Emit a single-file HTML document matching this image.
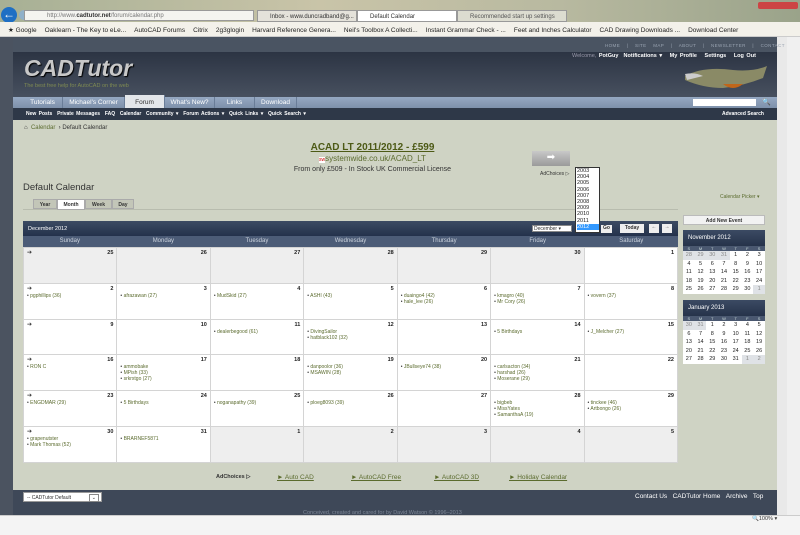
<!DOCTYPE html>
<html><head><meta charset="utf-8"><style>
*{margin:0;padding:0;box-sizing:border-box}
body{width:800px;height:535px;overflow:hidden;background:#4b5360;font-family:"Liberation Sans",Verdana,sans-serif;position:relative;font-size:6px;color:#333}
.a{position:absolute}
#chrome{left:0;top:0;width:800px;height:22px;background:linear-gradient(90deg,#a7b095,#c9c4a8 40%,#b8b9a0 70%,#9aa38a)}
#fav{left:0;top:22px;width:800px;height:15px;background:#f3f1ea;border-bottom:1px solid #ccc;font-size:6.5px;color:#222;white-space:nowrap;padding:4px 0 0 8px}
#fav span{margin-right:8px}
.url{left:24px;top:10px;width:230px;height:11px;background:#f4f4f0;border:1px solid #999;font-size:6px;color:#777;padding:2px 0 0 22px}
.tab{top:10px;height:12px;font-size:6px;padding:3px 0 0 12px;border:1px solid #999;color:#333}
#wrap{left:13px;top:37px;width:764px;height:478px;background:#4a5462}
#scroll{left:777px;top:37px;width:10px;height:478px;background:#e9e9e9}
#scroll2{left:787px;top:37px;width:13px;height:478px;background:#f0f0f0}
#toplinks{left:605px;top:43px;font-size:4.5px;color:#9aa4b2;letter-spacing:.4px;white-space:nowrap;word-spacing:5px}
#header{left:13px;top:52px;width:764px;height:45px;background:linear-gradient(#2c3443,#47505f)}
#logo{left:24px;top:55px;font:italic bold 23px "Liberation Sans",sans-serif;color:#c8c8c8;text-shadow:1px 1px 1px #000}
#tag{left:24px;top:83px;font-size:5.5px;color:#7f8b52}
#welcome{left:572px;top:53px;font-size:5.5px;color:#fff;font-weight:bold;white-space:nowrap;word-spacing:1px}
#nav{left:13px;top:97px;width:764px;height:11px;background:linear-gradient(#95a8c2,#7e91ab)}
.nt{top:97px;height:11px;font-size:6.5px;color:#fff;padding-top:2px;text-align:center;border-right:1px solid #6a7d98}
#sub{left:13px;top:108px;width:764px;height:12px;background:#2e3848;color:#fff;font-size:5px;font-weight:bold;padding:3px 0 0 13px;word-spacing:1px}
#content{left:13px;top:120px;width:764px;height:370px;background:#cfd3c4}
#crumb{left:24px;top:125px;font-size:6px;color:#333}
table.cal{position:absolute;left:23px;top:247px;width:655px;border-collapse:collapse;table-layout:fixed}
table.cal td{height:35.8px;border:1px solid #d4d4d4;background:#fff;vertical-align:top;position:relative;font-size:5px;color:#5b6b2e;padding:9px 0 0 3px}
table.cal td.g{background:#eeeeee}
table.cal td b{position:absolute;right:3px;top:2px;color:#222;font-size:5.5px}
table.cal td i{position:absolute;left:3px;top:1px;font-style:normal;color:#333;font-size:6px}
table.cal td div{line-height:6px}
table.cal td div:before{content:"• ";color:#333}
.mini{position:absolute;left:683px;width:82px;border-collapse:collapse;font-size:5.5px;text-align:center;color:#222;table-layout:fixed}
.mini td{background:#fff;height:8.5px;line-height:8.5px;padding:0}
.mini td.o{background:#dfe2e6;color:#888}
.mini .h td{background:#4a5870;color:#cdd;height:5px;line-height:5px;font-size:4px}
.mh{position:absolute;left:683px;width:82px;height:16px;background:linear-gradient(#3b4a63,#26334a);color:#fff;font-size:6px;padding:5px 0 0 5px}
.ad{position:absolute;top:474px;font-size:6.5px;color:#5b6b2e;text-decoration:underline;white-space:nowrap}
</style></head><body>
<div class="a" id="chrome"></div>
<div class="a" style="left:1px;top:7px;width:16px;height:16px;border-radius:50%;background:#1f6fc4;color:#fff;font-size:12px;text-align:center;line-height:15px">←</div>
<div class="a" style="left:19px;top:10px;width:10px;height:10px;border-radius:50%;background:#8fb0c9"></div>
<div class="a url">http://www.<b style="color:#333">cadtutor.net</b>/forum/calendar.php</div>
<div class="a tab" style="left:257px;width:100px;background:#e4e2da">Inbox - www.duncradband@g...</div>
<div class="a tab" style="left:357px;width:100px;background:#fff">Default Calendar</div>
<div class="a tab" style="left:457px;width:110px;background:#dcdcd0;color:#555">Recommended start up settings</div>
<div class="a" style="left:758px;top:2px;width:40px;height:7px;background:#c44;border-radius:2px"></div>
<div class="a" id="fav"><span>★ Google</span><span>Oaklearn - The Key to eLe...</span><span>AutoCAD Forums</span><span>Citrix</span><span>2g3glogin</span><span>Harvard Reference Genera...</span><span>Neil's Toolbox  A Collecti...</span><span>Instant Grammar Check - ...</span><span>Feet and Inches Calculator</span><span>CAD Drawing Downloads ...</span><span>Download Center</span></div>
<div class="a" id="wrap"></div>
<div class="a" id="scroll"></div><div class="a" id="scroll2"></div>
<div class="a" id="toplinks">HOME | SITE MAP | ABOUT | NEWSLETTER | CONTACT</div>
<div class="a" id="header"></div>
<div class="a" id="logo">CADTutor</div>
<div class="a" id="tag">The best free help for AutoCAD on the web</div>
<div class="a" id="welcome"><span style="color:#99a;font-weight:normal">Welcome,</span> PotGuy &nbsp;Notifications ▾ &nbsp;&nbsp;My Profile &nbsp;&nbsp;Settings &nbsp;&nbsp;Log Out</div>
<svg class="a" style="left:683px;top:62px" width="85" height="35"><path d="M2 14 Q20 4 50 8 Q70 10 84 4 L80 16 Q60 24 40 26 Q20 26 2 18Z" fill="#8a8a66"/><path d="M40 22 Q50 30 60 22Z" fill="#c0661a"/><path d="M2 12 Q12 10 20 14 L4 18Z" fill="#ccc"/></svg>
<div class="a" id="nav"></div>
<div class="a nt" style="left:23px;width:40px">Tutorials</div>
<div class="a nt" style="left:63px;width:62px">Michael's Corner</div>
<div class="a nt" style="left:125px;top:95px;height:13px;width:40px;background:#e3e6ea;color:#333;padding-top:4px">Forum</div>
<div class="a nt" style="left:165px;width:50px">What's New?</div>
<div class="a nt" style="left:215px;width:40px">Links</div>
<div class="a nt" style="left:255px;width:42px">Download</div>
<div class="a" style="left:693px;top:99px;width:63px;height:7px;background:#fff"></div>
<div class="a" style="left:762px;top:98px;font-size:7px;color:#fff">🔍</div>
<div class="a" id="sub">New Posts &nbsp;Private Messages &nbsp;FAQ &nbsp;Calendar &nbsp;Community ▾ &nbsp;Forum Actions ▾ &nbsp;Quick Links ▾ &nbsp;Quick Search ▾</div>
<div class="a" style="left:722px;top:111px;font-size:5px;color:#fff;font-weight:bold">Advanced Search</div>
<div class="a" id="content"></div>
<div class="a" id="crumb">⌂ &nbsp;<span style="color:#5b6b2e">Calendar</span> &nbsp;› Default Calendar</div>
<div class="a" style="left:250px;top:142px;width:245px;text-align:center;font-size:10px;font-weight:bold;color:#4d5a16;text-decoration:underline">ACAD LT 2011/2012 - £599</div>
<div class="a" style="left:250px;top:154px;width:245px;text-align:center;font-size:8px;color:#5b6b2e"><span style="background:#fff;color:#c00;font-size:5px">sw</span>systemwide.co.uk/ACAD_LT</div>
<div class="a" style="left:250px;top:166px;width:245px;text-align:center;font-size:7px;color:#333">From only £509 - In Stock UK Commercial License</div>
<div class="a" style="left:532px;top:151px;width:38px;height:15px;background:linear-gradient(#c8c8c8,#9a9a9a);color:#fff;text-align:center;font-size:10px;line-height:14px">➡</div>
<div class="a" style="left:540px;top:171px;font-size:5px;color:#333">AdChoices ▷</div>
<div class="a" style="left:23px;top:182px;font-size:9.5px;color:#333">Default Calendar</div>
<div class="a" style="left:720px;top:194px;font-size:5px;color:#5b6b2e">Calendar Picker ▾</div>
<div class="a" style="left:23px;top:209px;width:655px;border-top:1px solid #b8bcae"></div>
<div class="a" style="left:33px;top:199px;width:24px;height:10px;background:#c3c6b8;border:1px solid #aaa;font-size:5px;font-weight:bold;text-align:center;padding-top:2px">Year</div>
<div class="a" style="left:57px;top:199px;width:28px;height:11px;background:#fff;border:1px solid #aaa;font-size:5px;font-weight:bold;text-align:center;padding-top:2px">Month</div>
<div class="a" style="left:85px;top:199px;width:27px;height:10px;background:#c3c6b8;border:1px solid #aaa;font-size:5px;font-weight:bold;text-align:center;padding-top:2px">Week</div>
<div class="a" style="left:112px;top:199px;width:22px;height:10px;background:#c3c6b8;border:1px solid #aaa;font-size:5px;font-weight:bold;text-align:center;padding-top:2px">Day</div>
<div class="a" style="left:23px;top:221px;width:655px;height:16px;background:linear-gradient(#3c4b63,#22304a);color:#fff;font-size:5.5px;padding:5px 0 0 5px">December 2012</div>
<div class="a" style="left:532px;top:225px;width:40px;height:7px;background:#fff;border:1px solid #888;font-size:5px;padding-left:1px">December ▾</div>
<div class="a" style="left:601px;top:225px;width:11px;height:8px;background:#eee;font-size:5px;font-weight:bold;text-align:center">Go</div>
<div class="a" style="left:620px;top:224px;width:24px;height:9px;background:#eee;font-size:5px;font-weight:bold;text-align:center;padding-top:1px">Today</div>
<div class="a" style="left:649px;top:224px;width:10px;height:9px;background:#eee;font-size:5px;text-align:center">←</div>
<div class="a" style="left:662px;top:224px;width:10px;height:9px;background:#eee;font-size:5px;text-align:center">→</div>
<div class="a" style="left:575px;top:167px;width:25px;height:66px;background:#fff;border:1px solid #333;font-size:5.5px;line-height:6.2px;padding-left:1px;color:#222">2003<br>2004<br>2005<br>2006<br>2007<br>2008<br>2009<br>2010<br>2011<br><span style="background:#3399ff;color:#fff;display:block">2012</span></div>
<div class="a" style="left:23px;top:236px;width:655px;height:11px;background:#4c5c77;color:#ccd3dd;font-size:6px;display:flex"><div style="flex:1;text-align:center;padding-top:2px">Sunday</div><div style="flex:1;text-align:center;padding-top:2px">Monday</div><div style="flex:1;text-align:center;padding-top:2px">Tuesday</div><div style="flex:1;text-align:center;padding-top:2px">Wednesday</div><div style="flex:1;text-align:center;padding-top:2px">Thursday</div><div style="flex:1;text-align:center;padding-top:2px">Friday</div><div style="flex:1;text-align:center;padding-top:2px">Saturday</div></div>
<table class="cal">
<tr><td class="g"><i>➔</i><b>25</b></td><td class="g"><b>26</b></td><td class="g"><b>27</b></td><td class="g"><b>28</b></td><td class="g"><b>29</b></td><td class="g"><b>30</b></td><td><b>1</b></td></tr>
<tr><td><i>➔</i><b>2</b><div>pgphillips (36)</div></td><td><b>3</b><div>afrazawan (27)</div></td><td><b>4</b><div>MudSkid (27)</div></td><td><b>5</b><div>ASHI (43)</div></td><td><b>6</b><div>duaingo4 (42)</div><div>hale_lee (26)</div></td><td><b>7</b><div>kmagro (40)</div><div>Mr Cory (26)</div></td><td><b>8</b><div>vovern (37)</div></td></tr>
<tr><td><i>➔</i><b>9</b></td><td><b>10</b></td><td><b>11</b><div>dealerbegood (61)</div></td><td><b>12</b><div>DivingSailor</div><div>hatblack102 (32)</div></td><td><b>13</b></td><td><b>14</b><div>5 Birthdays</div></td><td><b>15</b><div>J_Melcher (27)</div></td></tr>
<tr><td><i>➔</i><b>16</b><div>RON C</div></td><td><b>17</b><div>ammobake</div><div>MPish (33)</div><div>srkrxtgo (27)</div></td><td><b>18</b></td><td><b>19</b><div>danpoolor (36)</div><div>MSAWIN (28)</div></td><td><b>20</b><div>JBullseye74 (38)</div></td><td><b>21</b><div>carlsacton (34)</div><div>harshad (26)</div><div>Moserane (29)</div></td><td><b>22</b></td></tr>
<tr><td><i>➔</i><b>23</b><div>ENGDMAR (29)</div></td><td><b>24</b><div>5 Birthdays</div></td><td><b>25</b><div>noganapathy (39)</div></td><td><b>26</b><div>ploeg8093 (39)</div></td><td><b>27</b></td><td><b>28</b><div>bigbeb</div><div>MissYates</div><div>SamanthaA (19)</div></td><td><b>29</b><div>tinckee (46)</div><div>Artbongo (26)</div></td></tr>
<tr><td><i>➔</i><b>30</b><div>grapenutster</div><div>Mark Thomas (52)</div></td><td><b>31</b><div>BRARNEF5871</div></td><td class="g"><b>1</b></td><td class="g"><b>2</b></td><td class="g"><b>3</b></td><td class="g"><b>4</b></td><td class="g"><b>5</b></td></tr>
</table>
<div class="a" style="left:683px;top:215px;width:82px;height:10px;background:#f2f2f2;border:1px solid #bbb;font-size:5px;font-weight:bold;text-align:center;padding-top:2px">Add New Event</div>
<div class="mh" style="top:230px">November 2012</div>
<table class="mini" style="top:246px">
<tr class="h"><td>S</td><td>M</td><td>T</td><td>W</td><td>T</td><td>F</td><td>S</td></tr>
<tr><td class="o">28</td><td class="o">29</td><td class="o">30</td><td class="o">31</td><td>1</td><td>2</td><td>3</td></tr>
<tr><td>4</td><td>5</td><td>6</td><td>7</td><td>8</td><td>9</td><td>10</td></tr>
<tr><td>11</td><td>12</td><td>13</td><td>14</td><td>15</td><td>16</td><td>17</td></tr>
<tr><td>18</td><td>19</td><td>20</td><td>21</td><td>22</td><td>23</td><td>24</td></tr>
<tr><td>25</td><td>26</td><td>27</td><td>28</td><td>29</td><td>30</td><td class="o">1</td></tr>
</table>
<div class="mh" style="top:300px">January 2013</div>
<table class="mini" style="top:316px">
<tr class="h"><td>S</td><td>M</td><td>T</td><td>W</td><td>T</td><td>F</td><td>S</td></tr>
<tr><td class="o">30</td><td class="o">31</td><td>1</td><td>2</td><td>3</td><td>4</td><td>5</td></tr>
<tr><td>6</td><td>7</td><td>8</td><td>9</td><td>10</td><td>11</td><td>12</td></tr>
<tr><td>13</td><td>14</td><td>15</td><td>16</td><td>17</td><td>18</td><td>19</td></tr>
<tr><td>20</td><td>21</td><td>22</td><td>23</td><td>24</td><td>25</td><td>26</td></tr>
<tr><td>27</td><td>28</td><td>29</td><td>30</td><td>31</td><td class="o">1</td><td class="o">2</td></tr>
</table>
<div class="a" style="left:216px;top:474px;font-size:5.5px;color:#333;font-weight:bold">AdChoices ▷</div>
<div class="ad" style="left:277px">► Auto CAD</div>
<div class="ad" style="left:351px">► AutoCAD Free</div>
<div class="ad" style="left:434px">► AutoCAD 3D</div>
<div class="ad" style="left:509px">► Holiday Calendar</div>
<div class="a" style="left:13px;top:490px;width:764px;height:25px;background:#3e4858"></div>
<div class="a" style="left:23px;top:492px;width:79px;height:10px;background:#fff;border:1px solid #999;font-size:5px;padding:2px 0 0 3px">-- CADTutor Default <span style="position:absolute;right:2px;top:1px;border:1px solid #888;padding:0 2px">⌄</span></div>
<div class="a" style="left:635px;top:493px;font-size:6.5px;color:#fff;white-space:nowrap">Contact Us &nbsp;&nbsp;CADTutor Home &nbsp;&nbsp;Archive &nbsp;&nbsp;Top</div>
<div class="a" style="left:303px;top:510px;font-size:5.5px;color:#7c8696">Conceived, created and cared for by David Watson © 1996–2013</div>
<div class="a" style="left:0;top:515px;width:800px;height:20px;background:#f4f4f4;border-top:1px solid #ccc"></div>
<div class="a" style="left:752px;top:516px;font-size:5.5px;color:#333">🔍100% ▾</div>
</body></html>
